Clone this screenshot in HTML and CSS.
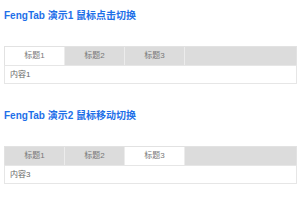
FILE: index.html
```html
<!DOCTYPE html>
<html>
<head>
<meta charset="utf-8">
<link rel="stylesheet" href="styles.css">
</head>
<body>
<section class="demo">
  <h2 class="title">FengTab 演示1 鼠标点击切换</h2>
  <div class="tabs">
    <div class="tab-bar">
      <div class="tab active">标题1</div>
      <div class="tab">标题2</div>
      <div class="tab">标题3</div>
    </div>
    <div class="tab-content">内容1</div>
  </div>
</section>
<section class="demo">
  <h2 class="title">FengTab 演示2 鼠标移动切换</h2>
  <div class="tabs">
    <div class="tab-bar">
      <div class="tab">标题1</div>
      <div class="tab">标题2</div>
      <div class="tab active">标题3</div>
    </div>
    <div class="tab-content">内容3</div>
  </div>
</section>
</body>
</html>
```
FILE: styles.css
```css
html, body {
  margin: 0;
  padding: 0;
  background: #fff;
}
body {
  padding: 0 4px;
  font-family: "Liberation Sans", "Noto Sans CJK SC", sans-serif;
}
.demo {
  height: 100px;
  box-sizing: border-box;
  padding-top: 9px;
}
.title {
  margin: 0;
  height: 13px;
  line-height: 13px;
  font-size: 10px;
  font-weight: bold;
  color: #1e6fe8;
}
.tabs {
  margin-top: 24px;
  width: 293px;
}
.tab-bar {
  display: flex;
  height: 19px;
  background: #dcdcdc;
  border: 1px solid #e2e2e2;
  border-bottom: none;
  box-sizing: border-box;
}
.tab {
  width: 59px;
  border-right: 1px solid #ececec;
  font-size: 8px;
  line-height: 18px;
  text-align: center;
  color: #777;
}
.tab.active {
  background: #fff;
}
.tab-content {
  height: 19px;
  border: 1px solid #e6e6e6;
  box-sizing: border-box;
  font-size: 8px;
  line-height: 17px;
  padding-left: 5px;
  color: #666;
}
```
